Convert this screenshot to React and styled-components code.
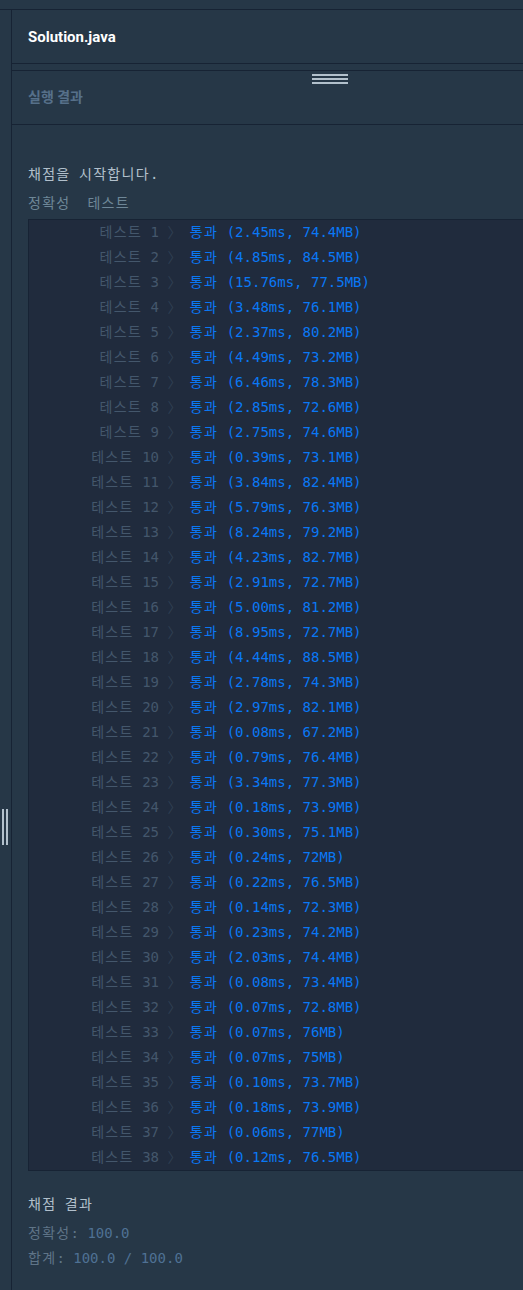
import React from "react";
import styled, { createGlobalStyle } from "styled-components";

const GlobalStyle = createGlobalStyle`
  html, body {
    margin: 0;
    padding: 0;
    background: #263747;
  }
  #root {
    min-height: 100vh;
  }
`;

const results = [
  ["2.45ms", "74.4MB"],
  ["4.85ms", "84.5MB"],
  ["15.76ms", "77.5MB"],
  ["3.48ms", "76.1MB"],
  ["2.37ms", "80.2MB"],
  ["4.49ms", "73.2MB"],
  ["6.46ms", "78.3MB"],
  ["2.85ms", "72.6MB"],
  ["2.75ms", "74.6MB"],
  ["0.39ms", "73.1MB"],
  ["3.84ms", "82.4MB"],
  ["5.79ms", "76.3MB"],
  ["8.24ms", "79.2MB"],
  ["4.23ms", "82.7MB"],
  ["2.91ms", "72.7MB"],
  ["5.00ms", "81.2MB"],
  ["8.95ms", "72.7MB"],
  ["4.44ms", "88.5MB"],
  ["2.78ms", "74.3MB"],
  ["2.97ms", "82.1MB"],
  ["0.08ms", "67.2MB"],
  ["0.79ms", "76.4MB"],
  ["3.34ms", "77.3MB"],
  ["0.18ms", "73.9MB"],
  ["0.30ms", "75.1MB"],
  ["0.24ms", "72MB"],
  ["0.22ms", "76.5MB"],
  ["0.14ms", "72.3MB"],
  ["0.23ms", "74.2MB"],
  ["2.03ms", "74.4MB"],
  ["0.08ms", "73.4MB"],
  ["0.07ms", "72.8MB"],
  ["0.07ms", "76MB"],
  ["0.07ms", "75MB"],
  ["0.10ms", "73.7MB"],
  ["0.18ms", "73.9MB"],
  ["0.06ms", "77MB"],
  ["0.12ms", "76.5MB"],
];

const mono = `"DejaVu Sans Mono", "Noto Sans CJK KR", monospace`;
const sans = `Roboto, "Noto Sans", "Noto Sans CJK KR", sans-serif`;

const Page = styled.div`
  display: flex;
  flex-direction: column;
  min-height: 100vh;
  background: #263747;
`;

const TopBar = styled.div`
  height: 9px;
  border-bottom: 1px solid #172334;
`;

const Main = styled.div`
  display: flex;
  flex: 1;
`;

const LeftStrip = styled.div`
  width: 12px;
  flex-shrink: 0;
  border-right: 1px solid #172334;
  display: flex;
  gap: 2px;
  padding: 799px 0 0 2px;
  box-sizing: border-box;
  align-items: flex-start;
`;

const Grip = styled.span`
  width: 2px;
  height: 36px;
  background: #b2c0cc;
`;

const Content = styled.div`
  flex: 1;
  min-width: 0;
  display: flex;
  flex-direction: column;
  overflow: hidden;
`;

const FileHeader = styled.div`
  height: 53px;
  display: flex;
  align-items: center;
  padding-left: 16px;
  border-bottom: 1px solid #172334;
  font-family: ${sans};
  font-size: 15px;
  font-weight: 700;
  color: #ffffff;
`;

const Gutter = styled.div`
  height: 6px;
`;

const ResultHeader = styled.div`
  position: relative;
  height: 55px;
  display: flex;
  align-items: center;
  padding: 0 0 3px 16px;
  box-sizing: border-box;
  border-top: 1px solid #172334;
  border-bottom: 1px solid #172334;
  font-family: ${sans};
  font-size: 14px;
  font-weight: 700;
  color: #56708a;
`;

const Handle = styled.div`
  position: absolute;
  left: 300px;
  top: 3px;
  display: flex;
  flex-direction: column;
  gap: 2px;
`;

const HandleBar = styled.span`
  width: 36px;
  height: 2px;
  background: #b2c0cc;
`;

const Output = styled.div`
  padding: 37px 0 20px 16px;
  font-family: ${mono};
  font-size: 14px;
  line-height: 25px;
  white-space: pre;
`;

const Ko = styled.span`
  letter-spacing: 1.3px;
`;

const Line = styled.div`
  color: ${({ $tone }) => $tone || "#b2c0cc"};
  margin-top: ${({ $gap }) => $gap || 0}px;
`;

const Table = styled.div`
  margin-top: 3px;
  margin-right: -40px;
  background: #202b3d;
  border: 1px solid #172334;
`;

const Row = styled.div`
  display: flex;
  height: 25px;
  align-items: center;
`;

const Label = styled.span`
  width: 130px;
  text-align: right;
  color: #44576c;
`;

const Arrow = styled.span`
  color: #2f3f52;
`;

const Pass = styled.span`
  color: #0a78f5;
`;

const Value = styled.span`
  color: #4f7194;
`;

export default function App() {
  return (
    <Page>
      <GlobalStyle />
      <TopBar />
      <Main>
        <LeftStrip>
          <Grip />
          <Grip />
        </LeftStrip>
        <Content>
          <FileHeader>Solution.java</FileHeader>
          <Gutter />
          <ResultHeader>
            실행 결과
            <Handle>
              <HandleBar />
              <HandleBar />
              <HandleBar />
            </Handle>
          </ResultHeader>
          <Output>
            <Line>
              <Ko>채점을</Ko> <Ko>시작합니다</Ko>.
            </Line>
            <Line $tone="#6e8798" $gap={4}>
              <Ko>정확성</Ko>  <Ko>테스트</Ko>
            </Line>
            <Table>
              {results.map(([time, mem], i) => (
                <Row key={i}>
                  <Label>
                    <Ko>테스트</Ko> {i + 1}
                  </Label>
                  <Arrow> 〉 </Arrow>
                  <Pass>
                    <Ko>통과</Ko> ({time}, {mem})
                  </Pass>
                </Row>
              ))}
            </Table>
            <Line $gap={21}>
              <Ko>채점</Ko> <Ko>결과</Ko>
            </Line>
            <Line $tone="#5f7487" $gap={4}>
              <Ko>정확성</Ko>: <Value>100.0</Value>
            </Line>
            <Line $tone="#5f7487">
              <Ko>합계</Ko>: <Value>100.0 / 100.0</Value>
            </Line>
          </Output>
        </Content>
      </Main>
    </Page>
  );
}
